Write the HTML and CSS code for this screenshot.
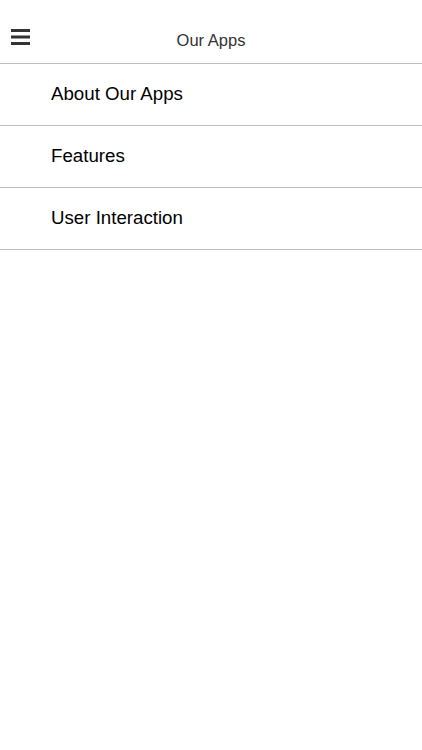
FILE: index.html
```html
<!DOCTYPE html>
<html>
<head>
<meta charset="utf-8">
<link rel="stylesheet" href="styles.css">
</head>
<body>
<header class="bar">
  <button class="menu" aria-label="Menu">
    <svg width="19" height="16" viewBox="0 0 19 16"><rect x="0" y="0" width="19" height="3" fill="#333"/><rect x="0" y="6.5" width="19" height="3" fill="#333"/><rect x="0" y="13" width="19" height="3" fill="#333"/></svg>
  </button>
  <h1 class="title">Our Apps</h1>
</header>
<ul class="list">
  <li class="item">About Our Apps</li>
  <li class="item">Features</li>
  <li class="item">User Interaction</li>
</ul>
</body>
</html>
```
FILE: styles.css
```css
html, body { margin: 0; padding: 0; background: #fff; }
body { font-family: "Liberation Sans", Arial, sans-serif; width: 422px; height: 750px; }
.bar {
  position: relative;
  display: flex;
  align-items: center;
  justify-content: center;
  border-bottom: 1.5px solid #bdbcc7;
  box-sizing: border-box;
  height: 63.5px;
}
.menu {
  position: absolute;
  left: 11px;
  top: 29px;
  border: 0; padding: 0; background: none;
  display: block; line-height: 0;
}
.title {
  margin: 0;
  font-size: 16.5px;
  font-weight: normal;
  color: #333;
  padding-top: 18px;
}
.list { list-style: none; margin: 0; padding: 0; }
.item {
  height: 62px;
  box-sizing: border-box;
  border-bottom: 1.5px solid #bdbcc7;
  display: flex;
  align-items: center;
  padding-left: 51px;
  font-size: 18.7px;
  color: #000;
}
```
